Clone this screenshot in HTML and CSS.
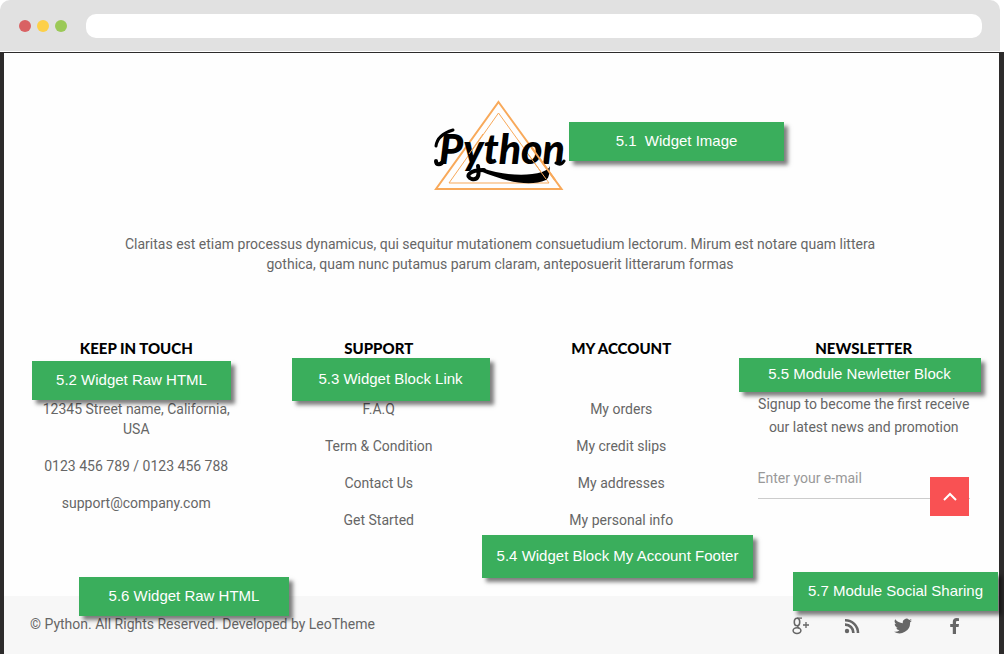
FILE: index.html
```html
<!DOCTYPE html>
<html lang="en">
<head>
  <meta charset="UTF-8">
  <meta name="viewport" content="width=device-width, initial-scale=1.0">
  <title>Python - Footer Widgets</title>
  <link rel="stylesheet" href="styles.css">
</head>
<body>
  <div class="browser-bar">
    <span class="dot red"></span>
    <span class="dot yellow"></span>
    <span class="dot green"></span>
    <div class="address"></div>
  </div>

  <div class="page">
    <div class="container">
      <div class="logo">
        <svg width="132" height="92" viewBox="0 0 132 92" role="img" aria-label="Python">
          <path d="M64.5 2 L127.5 89 H2 Z" fill="none" stroke="#f8a95a" stroke-width="2"/>
          <path d="M64.5 13 L115 83 H15 Z" fill="none" stroke="#f8a95a"/>
          <text class="logo-text" x="5" y="64">Python</text>
          <g fill="none" stroke="#000" stroke-linecap="round">
            <path d="M2 46 C3 38 9 33 19 30" stroke-width="3"/>
            <path d="M10 60 C7 66 2 65 2 61" stroke-width="4"/>
            <path d="M44 66 C46 77 43 80 38 79 C31 77 34 70 50 70" stroke-width="4"/>
            <path d="M122 63 Q127 66 130 61" stroke-width="3"/>
          </g>
          <path d="M48 68 C68 75 92 77 108 72 C112 70 115 69 116 66 C115 72 116 77 112 80 C94 88 68 80 46 71 Z"/>
          <path d="M49 34 L35 54 M94 54 L112 79" fill="none" stroke="#f8a95a"/>
          <path d="M98 48 L121 80" fill="none" stroke="#f8a95a" stroke-width="2"/>
        </svg>
        <span class="tag tag-image">5.1&nbsp; Widget Image</span>
      </div>

      <p class="intro">Claritas est etiam processus dynamicus, qui sequitur mutationem consuetudium lectorum. Mirum est notare quam littera gothica, quam nunc putamus parum claram, anteposuerit litterarum formas</p>

      <div class="columns">
        <div class="column">
          <h4>KEEP IN TOUCH</h4>
          <span class="tag tag-contact">5.2 Widget Raw HTML</span>
          <p>12345 Street name, California, USA</p>
          <p>0123 456 789 / 0123 456 788</p>
          <p>support@company.com</p>
        </div>
        <div class="column">
          <h4>SUPPORT</h4>
          <span class="tag tag-links">5.3 Widget Block Link</span>
          <ul>
            <li><a href="#">F.A.Q</a></li>
            <li><a href="#">Term &amp; Condition</a></li>
            <li><a href="#">Contact Us</a></li>
            <li><a href="#">Get Started</a></li>
          </ul>
        </div>
        <div class="column">
          <h4>MY ACCOUNT</h4>
          <ul>
            <li><a href="#">My orders</a></li>
            <li><a href="#">My credit slips</a></li>
            <li><a href="#">My addresses</a></li>
            <li><a href="#">My personal info</a></li>
          </ul>
          <span class="tag tag-account">5.4 Widget Block My Account Footer</span>
        </div>
        <div class="column">
          <h4>NEWSLETTER</h4>
          <span class="tag tag-newsletter">5.5 Module Newletter Block</span>
          <form class="newsletter">
            <label for="email">Signup to become the first receive our latest news and promotion</label>
            <input type="email" id="email" placeholder="Enter your e-mail">
          </form>
          <button class="to-top" type="button" aria-label="Back to top">
            <svg width="16" height="10" viewBox="0 0 16 10"><path d="M2 8 L8 2 L14 8" fill="none" stroke="#fff" stroke-width="2"/></svg>
          </button>
        </div>
      </div>
    </div>

    <div class="footer">
      <span class="tag tag-copyright">5.6 Widget Raw HTML</span>
      <p>© Python. All Rights Reserved. Developed by LeoTheme</p>
      <span class="tag tag-social">5.7 Module Social Sharing</span>
      <div class="social">
        <a href="#" aria-label="Google Plus">
          <svg width="18" height="18" viewBox="0 0 18 18" fill="none" stroke="#666">
            <ellipse cx="5" cy="5" rx="2.7" ry="3.7" stroke-width="1.6"/>
            <path d="M5 1.2 H10 M7 8.4 C4.5 9.5 6 10.5 7.5 11.5" stroke-width="1.3"/>
            <ellipse cx="5" cy="13.6" rx="3.9" ry="2.9" stroke-width="1.5"/>
            <path d="M14 5 V11 M11 8 H17" stroke-width="1.3"/>
          </svg>
        </a>
        <a href="#" aria-label="RSS">
          <svg width="18" height="18" viewBox="0 0 18 18" fill="none" stroke="#666" stroke-width="2.6">
            <circle cx="4" cy="14" r="2.2" fill="#666" stroke="none"/>
            <path d="M2 7.6 A8.2 8.2 0 0 1 10.4 16"/>
            <path d="M2 3.2 A12.8 12.8 0 0 1 15 16"/>
          </svg>
        </a>
        <a href="#" aria-label="Twitter">
          <svg width="18" height="18" viewBox="0 0 24 24" fill="#666">
            <path d="M24 4.6a10 10 0 0 1-2.8.8 5 5 0 0 0 2.1-2.7 10 10 0 0 1-3.1 1.2 4.9 4.9 0 0 0-8.4 4.5A14 14 0 0 1 1.7 3.1a4.9 4.9 0 0 0 1.5 6.6 5 5 0 0 1-2.2-.6 4.9 4.9 0 0 0 3.9 4.9 5 5 0 0 1-2.2.1 4.9 4.9 0 0 0 4.6 3.4A9.9 9.9 0 0 1 0 19.5 14 14 0 0 0 21.5 7.1 10 10 0 0 0 24 4.6z"/>
          </svg>
        </a>
        <a href="#" aria-label="Facebook">
          <svg width="18" height="18" viewBox="0 0 18 18" fill="#666">
            <path d="M14 1.2 V4 H12.4 C11.2 4 11 4.6 11 5.4 V7 H14 L13.6 10 H11 V17 H7.8 V10 H5.2 V7 H7.8 V4.8 C7.8 2.4 9.3 1 11.6 1 Z"/>
          </svg>
        </a>
      </div>
    </div>
  </div>
</body>
</html>
```

FILE: styles.css
```css
* {
  box-sizing: border-box;
}

body {
  margin: 0;
  min-height: 100vh;
  display: flex;
  flex-direction: column;
  background-color: #fff;
  font-family: Roboto, sans-serif;
  font-size: 14px;
  line-height: 20px;
  color: #666;
}

a {
  color: inherit;
  text-decoration: none;
}

p,
ul,
h4 {
  margin: 0;
  padding: 0;
}

ul {
  list-style: none;
}

/* browser frame */
.browser-bar {
  display: flex;
  align-items: center;
  gap: 6px;
  height: 51px;
  margin: 0 4px 1px 0;
  padding: 0 18px 0 19px;
  background-color: #e1e1e1;
  border-radius: 10px 10px 0 0;
}

.dot {
  width: 12px;
  height: 12px;
  border-radius: 50%;
}

.red {
  background-color: #d96163;
}

.yellow {
  background-color: #fdd048;
}

.green {
  background-color: #9bc957;
}

.address {
  flex: 1;
  height: 24px;
  margin-left: 13px;
  background-color: #fff;
  border-radius: 10px;
}

.page {
  flex: 1;
  display: flex;
  flex-direction: column;
  background-color: #fefefe;
  border: solid #2d2b2b;
  border-width: 1px 5px 0 4px;
}

.container {
  flex: 1;
  padding: 47px 14px 0 11px;
}

/* green callouts, laid over the page */
.tag {
  position: absolute;
  display: flex;
  align-items: center;
  justify-content: center;
  height: 39px;
  padding-bottom: 2px;
  background-color: #3aae5c;
  box-shadow: 4px 4px 4px rgba(0, 0, 0, 0.5);
  font-family: "Liberation Sans", Arial, sans-serif;
  font-size: 15px;
  color: #fff;
  white-space: nowrap;
}

.logo {
  position: relative;
  width: 132px;
  height: 92px;
  margin: 0 auto;
}

.logo-text {
  font-family: Lato, sans-serif;
  font-size: 41px;
  font-weight: 900;
  font-style: italic;
  fill: #000;
}

.tag-image {
  top: 22px;
  left: 135px;
  width: 215px;
}

.intro {
  max-width: 780px;
  margin: 42px auto 64px;
  text-align: center;
}

/* widgets */
.columns {
  display: grid;
  grid-template-columns: repeat(4, 1fr);
}

.column {
  position: relative;
  padding: 0 15px;
  text-align: center;
}

.column h4 {
  margin-bottom: 41px;
  font-family: Lato, sans-serif;
  font-size: 15px;
  font-weight: 900;
  color: #000;
}

.column p,
.column li {
  margin-bottom: 17px;
}

.tag-contact {
  top: 23px;
  left: 17px;
  width: 199px;
}

.tag-links {
  top: 20px;
  left: 34px;
  width: 198px;
  height: 43px;
}

.tag-account {
  top: 197px;
  left: -18px;
  width: 271px;
  height: 43px;
}

.tag-newsletter {
  top: 20px;
  left: -4px;
  width: 242px;
  height: 34px;
}

.newsletter {
  margin-top: -6px;
}

.newsletter label {
  display: block;
  line-height: 23px;
}

.newsletter input {
  display: block;
  width: 100%;
  height: 40px;
  margin-top: 20px;
  padding: 0 0 1px;
  border: none;
  border-bottom: 1px solid #ccc;
  background: none;
  font: inherit;
  color: #666;
}

.newsletter input::placeholder {
  color: #999;
}

.to-top {
  position: absolute;
  top: 139px;
  right: 16px;
  display: flex;
  align-items: center;
  justify-content: center;
  width: 39px;
  height: 39px;
  padding: 0;
  border: none;
  background-color: #f95153;
  cursor: pointer;
}

/* footer */
.footer {
  position: relative;
  display: flex;
  align-items: flex-start;
  justify-content: space-between;
  height: 58px;
  padding: 18px 36px 0 26px;
  background-color: #f7f7f7;
}

.tag-copyright {
  top: -19px;
  left: 75px;
  width: 210px;
}

.tag-social {
  top: -24px;
  right: 1px;
  width: 205px;
}

.social {
  display: flex;
  gap: 33px;
  padding-top: 3px;
}

.social svg {
  display: block;
}
```
